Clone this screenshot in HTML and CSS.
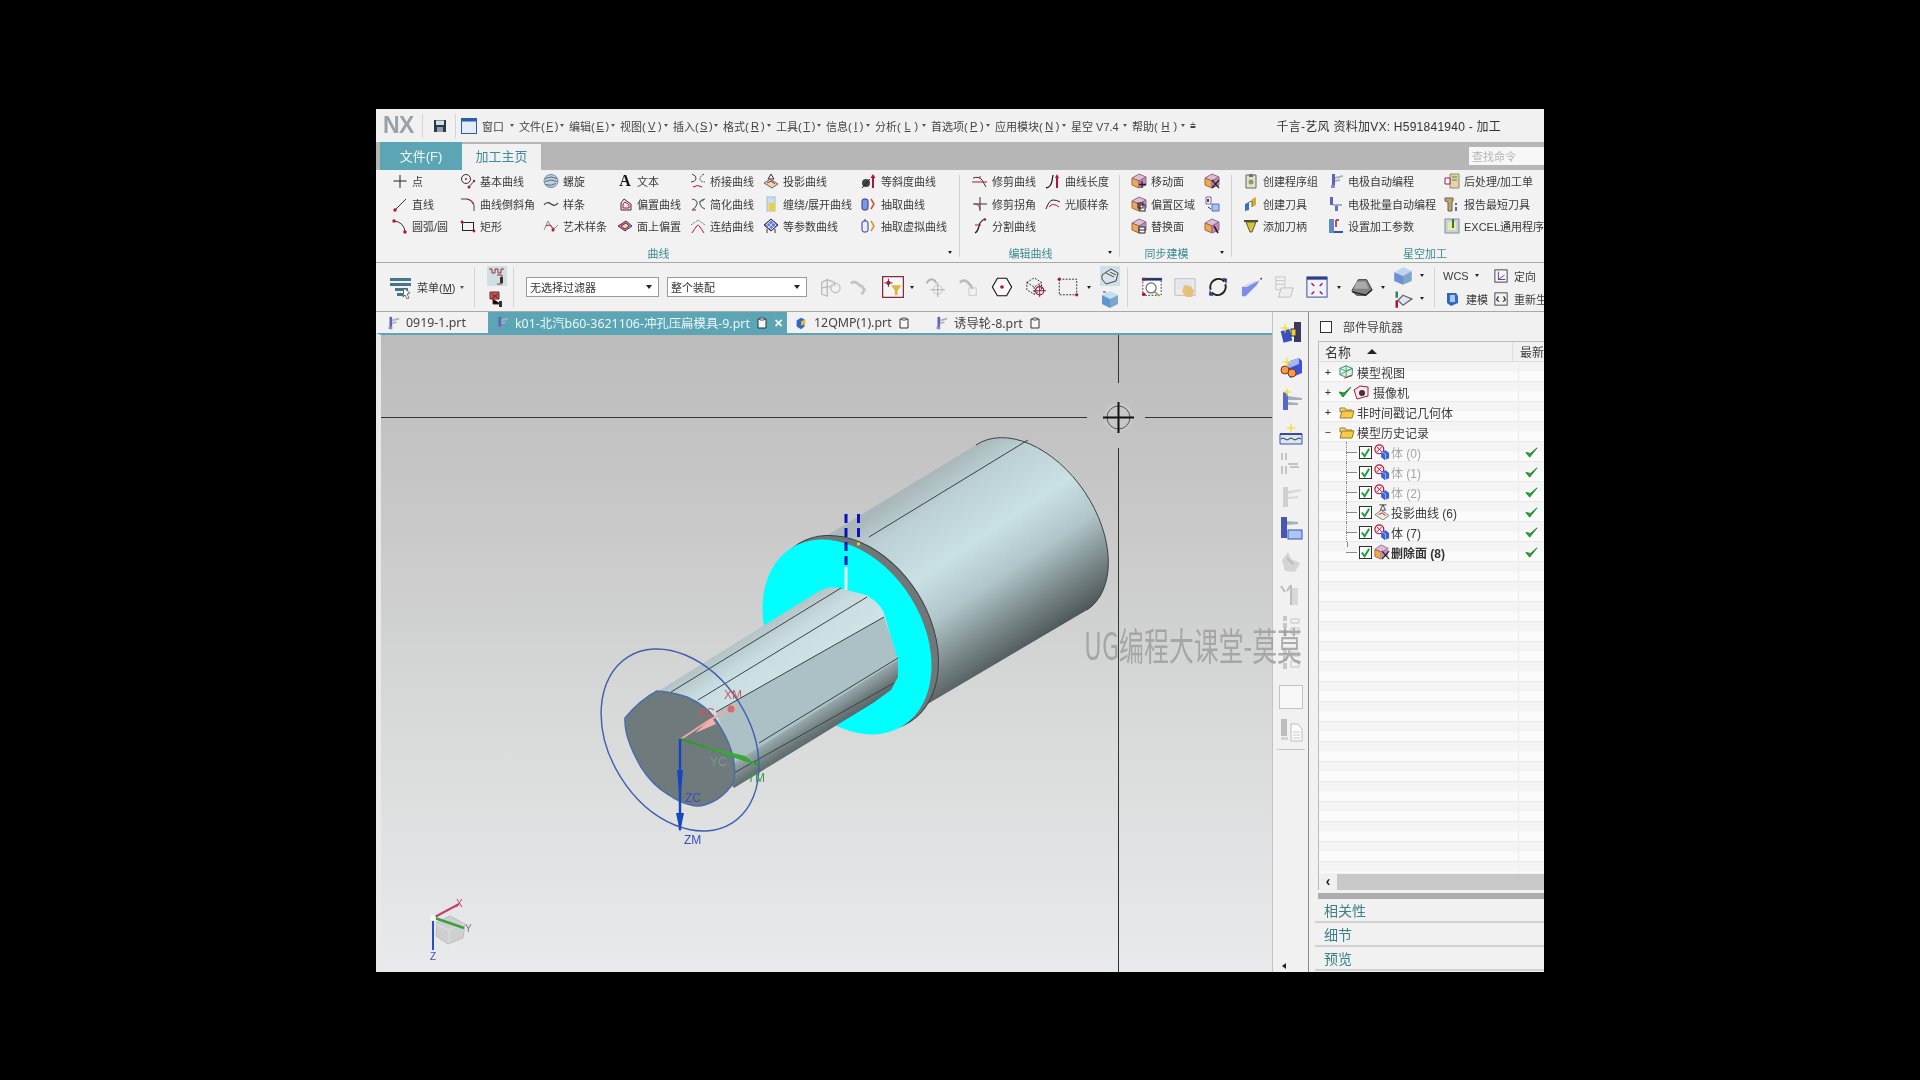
FILE: index.html
```html
<!DOCTYPE html>
<html lang="zh-CN">
<head>
<meta charset="utf-8">
<title>NX</title>
<link rel="stylesheet" href="styles.css">
</head>
<body>
<svg class="defs" xmlns="http://www.w3.org/2000/svg">
  <symbol id="pt" viewBox="0 0 16 16"><path d="M8 2v13M1.500 8h13" stroke="#222" fill="none"/></symbol>
  <symbol id="basic" viewBox="0 0 16 16"><circle cx="6" cy="6" r="4.500" fill="none" stroke="#333"/><circle cx="6" cy="6" r="1" fill="#a22"/><path d="M9 14l5-6" stroke="#444"/><circle cx="9" cy="14" r="1.500" fill="#b3123c"/><circle cx="14" cy="8" r="1.200" fill="#b3123c"/></symbol>
  <symbol id="helix" viewBox="0 0 16 16"><ellipse cx="8" cy="8" rx="7" ry="6.500" fill="#c2d0de" stroke="#6f8aa3"/><path d="M2 5.500q6-3 12 0M2 8.500q6-3 12 0M2 11.500q6 2 11-1" stroke="#50708c" fill="none"/></symbol>
  <symbol id="line" viewBox="0 0 16 16"><path d="M3 14L14 3" stroke="#333"/><circle cx="3" cy="14" r="1.700" fill="#b3123c"/></symbol>
  <symbol id="chamfer" viewBox="0 0 16 16"><path d="M1 3h6q6 1 7 6v6" stroke="#444" fill="none"/><path d="M7 3q5 1 6 5" stroke="#b3123c" fill="none"/></symbol>
  <symbol id="wave" viewBox="0 0 16 16"><path d="M1 9q3-4 7-1t7-1" stroke="#333" fill="none" stroke-width="1.200"/></symbol>
  <symbol id="offset" viewBox="0 0 16 16"><path d="M4 14V7l3-4 4 3 3 2v6z" stroke="#333" fill="#f8e4ea"/><path d="M6 12V8l2-2 3 2 1 1v3z" stroke="#b3123c" fill="none"/></symbol>
  <symbol id="arc" viewBox="0 0 16 16"><path d="M2 3q10 1 11 11" stroke="#333" fill="none"/><circle cx="2" cy="3" r="1.700" fill="#b3123c"/><circle cx="13" cy="14" r="1.700" fill="#b3123c"/></symbol>
  <symbol id="rect" viewBox="0 0 16 16"><rect x="2.500" y="4.500" width="11" height="8" fill="none" stroke="#222"/><circle cx="2" cy="4" r="1.400" fill="#b3123c"/><circle cx="14" cy="13" r="1.400" fill="#b3123c"/></symbol>
  <symbol id="art" viewBox="0 0 16 16"><path d="M1 12L5 3l5 9 5-5" stroke="#8c8c8c" fill="none"/><path d="M3 8q4-3 8 3" stroke="#b3123c" fill="none"/><circle cx="10" cy="12" r="1.500" fill="#b3123c"/></symbol>
  <symbol id="face" viewBox="0 0 16 16"><path d="M1 8l8-5 6 5-7 5z" fill="#7d99d6" stroke="#6a2a44"/><path d="M4 8l5-3 3 3-4 3z" fill="#f2d9a8" stroke="#b3123c"/></symbol>
  <symbol id="bridge" viewBox="0 0 16 16"><path d="M2 1q5 2 4 5T1 9" stroke="#444" fill="none"/><path d="M14 1q-4 2-4 5t5 3" stroke="#444" fill="none" stroke-dasharray="2 1"/><path d="M3 14q5-3 9 0" stroke="#b3123c" fill="none"/></symbol>
  <symbol id="simplify" viewBox="0 0 16 16"><path d="M2 3q6 1 5 5T2 14" stroke="#444" fill="none"/><path d="M15 3q-6 1-5 5t5 5" stroke="#444" fill="none"/><path d="M2 14h4" stroke="#b3123c"/><path d="M9 6l5-2" stroke="#2a8a50"/></symbol>
  <symbol id="join" viewBox="0 0 16 16"><path d="M1 7l7-5 7 5" stroke="#777" fill="none" stroke-dasharray="2 1"/><path d="M2 15q5-8 6-8t6 8" stroke="#b3123c" fill="none"/></symbol>
  <symbol id="proj" viewBox="0 0 16 16"><path d="M8 1l-3 5h6z" fill="none" stroke="#334"/><path d="M1 10l6-4 8 5-6 4z" fill="#e9d4b8" stroke="#666"/><path d="M4 10l4-2 4 3" stroke="#b3123c" fill="none"/></symbol>
  <symbol id="wrap" viewBox="0 0 16 16"><rect x="4" y="1" width="8" height="14" fill="#c9dcf0" stroke="#a9bcd0"/><rect x="6" y="7" width="6" height="8" fill="#efcf3a"/></symbol>
  <symbol id="iso" viewBox="0 0 16 16"><path d="M8 1l7 6-7 6-7-6z" fill="#6b7ad0" stroke="#1e2a70"/><path d="M5 4l6 6M8 2l5 5M3 6l6 6M11 4l-6 6M8 2L3 7M13 7l-5 5" stroke="#fff" stroke-width=".700"/><path d="M4 11v4M12 11v4" stroke="#333"/></symbol>
  <symbol id="slope" viewBox="0 0 16 16"><circle cx="5" cy="10" r="4" fill="#444"/><path d="M1 15l8-9" stroke="#222"/><path d="M12 15V4" stroke="#b3123c" stroke-width="2"/><path d="M9.500 5l2.500-4 2.500 4z" fill="#b3123c"/></symbol>
  <symbol id="extract" viewBox="0 0 16 16"><rect x="1" y="3" width="6" height="11" rx="2" fill="#7f97e0" stroke="#2a3a90"/><path d="M10 3l3 5-3 5" stroke="#d0502a" fill="none" stroke-width="1.500"/></symbol>
  <symbol id="vextract" viewBox="0 0 16 16"><rect x="1" y="3" width="6" height="11" rx="2" fill="#e8eeff" stroke="#2a3a90"/><path d="M4 3V1" stroke="#2a3a90"/><path d="M10 3l3 5-3 5" stroke="#d89020" fill="none" stroke-width="1.500"/></symbol>
  <symbol id="trim" viewBox="0 0 16 16"><path d="M1 5q6-2 9 2l4 7" stroke="#333" fill="none"/><path d="M0 9h15" stroke="#b3123c"/><path d="M8 3v3" stroke="#b3123c"/></symbol>
  <symbol id="corner" viewBox="0 0 16 16"><path d="M1 8h14M8 1v14" stroke="#333" fill="none"/><path d="M3 8q4 0 5 5" stroke="#b3123c" fill="none"/></symbol>
  <symbol id="split" viewBox="0 0 16 16"><path d="M3 15q3-2 4-7t6-7" stroke="#222" fill="none" stroke-width="1.300"/><path d="M3 7h6" stroke="#b3123c"/><circle cx="13" cy="1.500" r="1.200" fill="#b3123c"/></symbol>
  <symbol id="length" viewBox="0 0 16 16"><path d="M1 15q5-1 6-7l1-6" stroke="#222" fill="none" stroke-width="1.300"/><path d="M12 15V5" stroke="#b3123c" stroke-width="2"/><path d="M10 5l2-4 2 4z" fill="#b3123c"/></symbol>
  <symbol id="smooth" viewBox="0 0 16 16"><path d="M1 13q3-9 7-9t7 2" stroke="#222" fill="none"/><path d="M4 11q4-5 10 0" stroke="#b3123c" fill="none"/></symbol>
  <symbol id="cube" viewBox="0 0 16 16"><path d="M8 1l7 3-7 4-7-3z" fill="#d5c0d8" stroke="#96688c"/><path d="M1 5l7 3v7l-7-3z" fill="#eea75c" stroke="#a86a2c"/><path d="M8 8l7-4v8l-7 3z" fill="#c28bb8" stroke="#96688c"/></symbol>
  <symbol id="cubeplus" viewBox="0 0 16 16"><use href="#cube"/><path d="M11 8v7M8 11.500h7" stroke="#222" stroke-width="1.300"/></symbol>
  <symbol id="cubeoff" viewBox="0 0 16 16"><use href="#cube"/><rect x="9" y="9" width="5" height="6" fill="#fff" stroke="#222"/><rect x="7" y="7" width="5" height="5" fill="none" stroke="#222"/></symbol>
  <symbol id="cuberep" viewBox="0 0 16 16"><use href="#cube"/><path d="M8 9h6v6H8zM8 12h6" fill="#fff" stroke="#222"/></symbol>
  <symbol id="cubex" viewBox="0 0 16 16"><use href="#cube"/><path d="M8 7l7 8M15 7l-7 8" stroke="#222" stroke-width="1.200"/></symbol>
  <symbol id="cubeq" viewBox="0 0 16 16"><use href="#cube"/><path d="M10 8l4 7" stroke="#222" stroke-width="1.600"/></symbol>
  <symbol id="swap" viewBox="0 0 16 16"><path d="M2 1h5v7H2z" fill="#fff" stroke="#5a6ac0"/><path d="M8 8h7v7H8z" fill="#a9c4ea" stroke="#5a6ac0"/><path d="M4 3v3" stroke="#b3123c" stroke-width="2"/><path d="M4 11l3 2" stroke="#334" /></symbol>
  <symbol id="clip" viewBox="0 0 16 16"><path d="M3 2h10v13H3z" fill="#e0e0d8" stroke="#5c6c5c"/><rect x="6" y="1" width="4" height="3" fill="#6a7a6a"/><circle cx="8" cy="9" r="2.500" fill="#8aa04a"/></symbol>
  <symbol id="tool" viewBox="0 0 16 16"><path d="M2 8l4-2v8l-4 1z" fill="#3a70c0"/><path d="M9 3l4-2v8l-4 2z" fill="#e2a82a"/><path d="M6 6l3-1v6" stroke="#3a8a50" fill="none"/></symbol>
  <symbol id="funnel" viewBox="0 0 16 16"><path d="M1 2h14v2H1z" fill="#4a4f3a"/><path d="M3 4h10l-4 10H7z" fill="#d8c43c" stroke="#5a5a2a"/></symbol>
  <symbol id="part" viewBox="0 0 16 16"><rect x="4" y="1" width="3" height="14" fill="#5e65b8"/><path d="M7 4l8-2v2l-8 2zM7 7l5-1v2l-5 1z" fill="#aab0b8"/><rect x="3" y="12" width="4" height="3" fill="#8c8cc0"/></symbol>
  <symbol id="elec2" viewBox="0 0 16 16"><rect x="2" y="1" width="3" height="8" fill="#5e65b8"/><path d="M5 9h9M9 9v6" stroke="#7d9cc8" stroke-width="1.500"/><rect x="7" y="10" width="3" height="5" fill="#6a70c0"/></symbol>
  <symbol id="elec3" viewBox="0 0 16 16"><rect x="1" y="1" width="5" height="14" fill="#5e8cc0"/><path d="M6 15h9v-2H6z" fill="#3a4fc0"/><path d="M8 2v7M8 2h3" stroke="#b3123c" stroke-width="1.500"/></symbol>
  <symbol id="post" viewBox="0 0 16 16"><path d="M6 1h9v14H6z" fill="#e6d2a8" stroke="#8c8c70"/><path d="M1 5h5v6H1z" fill="#fff" stroke="#b3123c"/><path d="M8 4h5M8 7h5" stroke="#4a8a4a"/></symbol>
  <symbol id="short" viewBox="0 0 16 16"><path d="M1 2h8v3l-1 1v9H4V6L1 5z" fill="#c2a26a" stroke="#665"/><path d="M12 7v2M12 11v4" stroke="#2a3a90" stroke-width="1.500"/></symbol>
  <symbol id="excel" viewBox="0 0 16 16"><rect x="1" y="1" width="14" height="14" fill="#c8d4d8" stroke="#7f8f98"/><rect x="4" y="4" width="8" height="8" fill="#f0e8a0"/><path d="M9 1v9" stroke="#2a7a40" stroke-width="2"/></symbol>
  <symbol id="mn" viewBox="0 0 24 24"><path d="M1 3h21v3H1zM1 8h21v3H1zM6 13h13v3H6zM8 18h9v3H8z" fill="#46758c"/><path d="M15 13l6 5-3 1 2 4-2 1-2-4-2 2z" fill="#fff" stroke="#333" stroke-width=".700"/></symbol>
  <symbol id="hl1" viewBox="0 0 20 20"><path d="M2 3h3v4h3V3h3v4h3V3h3M10 9h5v9h-5" stroke="#9a2a2a" fill="none"/><rect x="13" y="11" width="3" height="6" fill="#333"/></symbol>
  <symbol id="hl2" viewBox="0 0 20 20"><path d="M3 3h9v7H3z" fill="#c25a5a" stroke="#6a2a2a"/><path d="M5 5l6 4M11 5l-6 4M6 10v5h8" stroke="#7a1a1a"/><rect x="12" y="12" width="3" height="6" fill="#333"/></symbol>
  <symbol id="g1" viewBox="0 0 24 24"><path d="M3 7l6-3v18l-6-2zM9 4l8 3v4M3 13l12-2" fill="none" stroke="#bcbcbc" stroke-width="1.500"/><circle cx="18" cy="13" r="5" fill="none" stroke="#c2c2c2" stroke-width="1.500"/></symbol>
  <symbol id="g2" viewBox="0 0 24 24"><path d="M3 8q4-3 7 0t5 3l3 4-3 5" fill="none" stroke="#c4c4c4" stroke-width="3"/></symbol>
  <symbol id="selbox" viewBox="0 0 24 24"><rect x=".700" y=".700" width="22.600" height="22.600" fill="#f6f6f6" stroke="#8c1c3c" stroke-width="1.300"/><path d="M7 3v9M2.500 7.500h9" stroke="#333"/><circle cx="7" cy="7.500" r="2.200" fill="#b3123c"/><path d="M10 10h11l-4 6v5h-3v-5z" fill="#e0b83c"/></symbol>
  <symbol id="g3" viewBox="0 0 24 24"><path d="M3 8q2-5 7-4 3 1 3 4" fill="none" stroke="#b0b0b0" stroke-width="2"/><circle cx="15" cy="15" r="5" fill="none" stroke="#c0c0c0"/><path d="M15 7v16M7 15h16" stroke="#a8a8a8"/></symbol>
  <symbol id="g4" viewBox="0 0 24 24"><path d="M3 7q5-4 9 0t5 7" fill="none" stroke="#bcbcbc" stroke-width="3"/><rect x="13" y="13" width="8" height="8" fill="none" stroke="#c8c8c8"/></symbol>
  <symbol id="hex" viewBox="0 0 24 24"><path d="M7 2.500h10l5.500 9.500L17 21.500H7L1.500 12z" fill="#f8f8f8" stroke="#111" stroke-width="1.200"/><circle cx="12" cy="12" r="2" fill="#b3123c"/></symbol>
  <symbol id="cubet" viewBox="0 0 24 24"><path d="M2 7l8-5 8 5v8l-8 5-8-5zM2 7l8 5 8-5M10 12v8" fill="none" stroke="#222" stroke-dasharray="2 1.500"/><circle cx="16" cy="16" r="4.500" fill="none" stroke="#8c1c3c" stroke-width="1.300"/><path d="M16 9v14M9 16h14" stroke="#8c1c3c"/></symbol>
  <symbol id="dash" viewBox="0 0 24 24"><rect x="2.500" y="3.500" width="19" height="17" fill="none" stroke="#222" stroke-dasharray="2 1.500"/><circle cx="2.500" cy="3.500" r="1.800" fill="#b3123c"/><circle cx="21.500" cy="20.500" r="1.800" fill="#b3123c"/></symbol>
  <symbol id="wire" viewBox="0 0 20 20"><path d="M2 9l9-6 7 4-2 8-10 3-4-5z" fill="#d8e6ea" stroke="#445"/><path d="M6 7l8 4M10 6l6 3" stroke="#445"/></symbol>
  <symbol id="box" viewBox="0 0 20 20"><path d="M10 2l8 4-8 4-8-4z" fill="#bfe0f4"/><path d="M2 6l8 4v9l-8-4z" fill="#5f95d0"/><path d="M10 10l8-4v9l-8 4z" fill="#7ea6cc"/><path d="M3 3h3" stroke="#b3123c"/></symbol>
  <symbol id="fit" viewBox="0 0 24 24"><rect x="1" y="2" width="22" height="20" fill="#fff" stroke="none"/><path d="M1 2h22v3H1z" fill="#2a3f8c"/><rect x="2" y="4" width="20" height="17" fill="none" stroke="#222" stroke-dasharray="2 1.500"/><rect x="2" y="2" width="3" height="3" fill="#8c1c3c"/><circle cx="3" cy="20" r="2" fill="#b3123c"/><circle cx="11" cy="13" r="5.500" fill="none" stroke="#667" stroke-width="1.300"/><path d="M15 17l5 5" stroke="#a8a050" stroke-width="2"/></symbol>
  <symbol id="zoomw" viewBox="0 0 24 24"><rect x="1" y="3" width="22" height="18" fill="#f2ece6" stroke="#b8b8c8"/><path d="M3 5h17v10H3z" fill="#dfe6f4"/><path d="M11 10l7 1 4 5-2 7h-7l-4-6z" fill="#e8c078"/></symbol>
  <symbol id="rot" viewBox="0 0 24 24"><path d="M4 15A9 9 0 0 1 19 6" fill="none" stroke="#222" stroke-width="2.200"/><path d="M20 9A9 9 0 0 1 5 18" fill="none" stroke="#222" stroke-width="2.200"/><path d="M17 2l5 1-1 6z" fill="#2a3f8c"/><path d="M7 22l-5-1 1-6z" fill="#2a3f8c"/></symbol>
  <symbol id="beam" viewBox="0 0 24 24"><path d="M1 12l14-6 5-1-3 5-12 12H1z" fill="#7d8ee8"/><path d="M1 12l14-6 5-1-14 7z" fill="#dbe2ff"/><circle cx="22" cy="3" r="1" fill="#8c1c3c"/></symbol>
  <symbol id="g5" viewBox="0 0 24 24"><path d="M3 1h10v14H3zM3 5h10M3 9h10" fill="none" stroke="#c4c4c4"/><path d="M9 13h13l-3 10H6z" fill="#eee" stroke="#bcbcbc"/></symbol>
  <symbol id="fitw" viewBox="0 0 24 24"><rect x="1" y="1" width="22" height="22" fill="#eef2fb" stroke="#2a3f8c"/><path d="M1 1h22v3H1z" fill="#2a3f8c"/><path d="M6 8l3 3M18 8l-3 3M6 20l3-3M18 20l-3-3" stroke="#b3123c" stroke-width="1.500"/></symbol>
  <symbol id="shade" viewBox="0 0 24 24"><path d="M1 16L8 4h9l6 11-7 6H6z" fill="#838383" stroke="#333"/><path d="M6 6h10l3 8H3z" fill="#aaa"/><path d="M1 17l15 4 7-6" fill="none" stroke="#222" stroke-width="1.500"/></symbol>
  <symbol id="cubeb" viewBox="0 0 16 16"><path d="M8 1l7 3-7 4-7-3z" fill="#bfd3f2"/><path d="M1 5l7 3v7l-7-3z" fill="#6d8fd8"/><path d="M8 8l7-4v8l-7 3z" fill="#7fa8c8"/></symbol>
  <symbol id="mix" viewBox="0 0 16 16"><path d="M8 5l7 3-7 5-4-4z" fill="#dfe4f4" stroke="#666"/><path d="M3 2v5" stroke="#2a8a50" stroke-width="2"/><path d="M3 9v6" stroke="#b3123c" stroke-width="2"/></symbol>
  <symbol id="orient" viewBox="0 0 16 16"><rect x="1" y="1" width="14" height="14" fill="#f4f4fa" stroke="#333"/><path d="M5 3v9h8" stroke="#2a3f8c" fill="none"/><path d="M5 12l7-5" stroke="#b3123c"/></symbol>
  <symbol id="model" viewBox="0 0 16 16"><path d="M3 2h9l2 3v7l-7 3-4-3z" fill="#2f68c8"/><path d="M6 4h5v7H6z" fill="#a8c8f0"/></symbol>
  <symbol id="regen" viewBox="0 0 16 16"><rect x="1" y="1" width="14" height="14" fill="#f4f4f4" stroke="#334"/><path d="M5 5l-2 4 3 2M11 5l2 4-3 2" stroke="#222" fill="none" stroke-width="1.300"/></symbol>
  <symbol id="tabdoc" viewBox="0 0 12 12"><path d="M2 2h8v9H2z" fill="#f7f7f7" stroke="#333"/><path d="M4 1h4v2H4z" fill="#fff" stroke="#333" stroke-width=".800"/></symbol>
  <symbol id="partb" viewBox="0 0 16 16"><path d="M3 5l5-3 4 2v8l-4 3-5-3z" fill="#2f68c8"/><path d="M8 6l5-2v5l-5 2z" fill="#e8b83c"/></symbol>
  <symbol id="nv1" viewBox="0 0 24 24"><rect x="3" y="10" width="9" height="12" fill="#3a4fc0" transform="rotate(-14 7 16)"/><rect x="15" y="2" width="7" height="20" fill="#3a3a60"/><rect x="12" y="9" width="5" height="7" fill="#e8d040" stroke="#333"/><path d="M5 7l1-5 1 5 5 1-5 1-1 5-1-5-5-1z" fill="#efe24a"/></symbol>
  <symbol id="nv2" viewBox="0 0 24 24"><path d="M8 7l12-4 3 3v12L11 23z" fill="#3d52d8"/><path d="M8 7l12-4v6L8 14z" fill="#a8b6f0"/><circle cx="6" cy="15" r="4" fill="#f0a040" stroke="#8c2a2a"/><circle cx="13" cy="18" r="4" fill="#f0a040" stroke="#8c2a2a"/><path d="M7 6l1-5 1 5 5 1-5 1-1 5-1-5-5-1z" fill="#efe24a"/></symbol>
  <symbol id="nv3" viewBox="0 0 24 24"><rect x="4" y="6" width="5" height="18" fill="#5868c8"/><path d="M9 10l14 2v2L9 14zM9 16l10 1v2L9 19z" fill="#a4b0b8"/><path d="M7 5l1-4 1 4 4 1-4 1-1 4-1-4-4-1z" fill="#efe24a"/></symbol>
  <symbol id="nv4" viewBox="0 0 24 24"><path d="M1 13h22v10H1z" fill="#d8e6ee" stroke="#3a4fc0"/><path d="M1 13h22" stroke="#1c2c90" stroke-width="1.500"/><path d="M2 18q2-2 4 0t4 0 4 0 4 0 4 0" stroke="#333" fill="none"/><path d="M11 6l1-5 1 5 5 1-5 1-1 5-1-5-5-1z" fill="#efe24a"/></symbol>
  <symbol id="nv5" viewBox="0 0 24 24"><path d="M3 2v7M7 2v7M9 13h10M3 15v8M7 15v8M11 16h9" stroke="#c4c4c4" stroke-width="2"/></symbol>
  <symbol id="nv6" viewBox="0 0 24 24"><rect x="4" y="2" width="5" height="20" fill="#cfcfcf"/><path d="M9 6l13-2v2L9 9zM9 12l10-1v2L9 14z" fill="#d8d8d8"/></symbol>
  <symbol id="nv7" viewBox="0 0 24 24"><rect x="2" y="1" width="6" height="21" fill="#4a56b0"/><rect x="9" y="14" width="14" height="9" fill="#a8c8f0" stroke="#3a4fc0"/><path d="M8 5l11 1v2L8 9z" fill="#a4b0b8"/></symbol>
  <symbol id="nv8" viewBox="0 0 24 24"><path d="M3 10l6-8 3 7 9 4-5 9-10-1z" fill="#d4d4d4"/><path d="M8 8l6 6" stroke="#bbb" stroke-width="2"/></symbol>
  <symbol id="nv9" viewBox="0 0 24 24"><path d="M2 3l4 6M12 2v20M12 2l-4 6" stroke="#bcbcbc" stroke-width="2" fill="none"/><rect x="13" y="5" width="6" height="17" fill="#d8d8d8"/></symbol>
  <symbol id="nv10" viewBox="0 0 24 24"><path d="M4 1h4v5H4zM4 8h4v5H4zM4 15h4v6H4z" fill="#c8c8c8"/><path d="M12 4h8v4h-8zM12 13h8v6h-8z" fill="none" stroke="#c4c4c4"/></symbol>
  <symbol id="nv11" viewBox="0 0 24 24"><rect x=".500" y=".500" width="23" height="23" fill="#f8f8f8" stroke="#c2c2c2"/></symbol>
  <symbol id="nv12" viewBox="0 0 24 24"><rect x="2" y="1" width="6" height="17" fill="#bdbdbd"/><path d="M2 19h7v3H2z" fill="#d4d4d4"/><path d="M12 6h7l4 5v12H12z" fill="#fbfbfb" stroke="#bdbdbd"/><path d="M14 14h7M14 17h7M14 20h7" stroke="#c8c8c8"/></symbol>
  <symbol id="mview" viewBox="0 0 18 16"><path d="M8 1l7 3v7l-7 3-7-3V4z" fill="#dff2e6" stroke="#1f8a60"/><path d="M1 4l7 3 7-3M8 7v7M8 1v6M1 11l14-7" stroke="#1f8a60" fill="none" stroke-width=".800"/><path d="M6 15l9-3" stroke="#b3123c"/></symbol>
  <symbol id="okg" viewBox="0 0 14 14"><path d="M1 7l4 5 8-10-7 6z" fill="#28a040" stroke="#1a8a30"/></symbol>
  <symbol id="cam" viewBox="0 0 16 16"><path d="M1 6l6-4 8 1v9l-11 3z" fill="#fbe8e8" stroke="#a01c3c"/><circle cx="9" cy="9" r="3" fill="#333"/><circle cx="9" cy="9" r="1" fill="#b3123c"/></symbol>
  <symbol id="folder" viewBox="0 0 16 14"><path d="M1 3h5l1 2h6v2H1z" fill="#f2dc88" stroke="#9a7a2a"/><path d="M1 13L3 6h12l-2 7z" fill="#f6c94a" stroke="#9a7a2a"/></symbol>
  <symbol id="tree-box" viewBox="0 0 14 14"><rect x=".500" y=".500" width="13" height="13" fill="#fff" stroke="#222"/><path d="M3 7l3 4 5-8" stroke="#1fa040" stroke-width="2.200" fill="none"/></symbol>
  <symbol id="body" viewBox="0 0 18 18"><circle cx="6" cy="6" r="5" fill="#fbe8e8" stroke="#b3123c" stroke-width="1.300"/><path d="M3 3l6 6M3 9l6-6" stroke="#b3123c"/><path d="M8 9l5-2 4 3v6l-5 2-4-3z" fill="#3d62d8"/><path d="M8 9l5 2v7" fill="none" stroke="#a8c0f0"/></symbol>
  <symbol id="projr" viewBox="0 0 18 18"><path d="M6 1h8M10 1l-3 6h6z" fill="none" stroke="#333"/><path d="M1 12l7-5 9 6-7 5z" fill="#f0ead8" stroke="#777"/><path d="M5 12l4-2 4 3" stroke="#b3123c" fill="none"/></symbol>
  <symbol id="del" viewBox="0 0 18 18"><path d="M8 1l8 4-8 4-7-3z" fill="#d5c0d8" stroke="#96688c"/><path d="M1 6l7 3v8l-7-3z" fill="#eea75c" stroke="#a86a2c"/><path d="M8 9l8-4v8l-8 4z" fill="#c28bb8"/><path d="M9 8l8 9M17 8l-8 9" stroke="#222" stroke-width="1.300"/></symbol>
  <symbol id="floppy" viewBox="0 0 14 14"><path d="M1 1h12v12H1z" fill="#2a3a48"/><rect x="3" y="1.500" width="8" height="4.500" fill="#d8dee4"/><rect x="4" y="8" width="6" height="5" fill="#8fa0b0"/></symbol>
  <symbol id="win" viewBox="0 0 16 16"><rect x=".500" y=".500" width="15" height="15" fill="#e4ecfa" stroke="#2a5fa8"/><path d="M1 1h14v2.500H1z" fill="#2a5fa8"/></symbol>
</svg>

<div class="stage">
  <div class="window">
    <header class="titlebar">
      <span class="logo">NX</span>
      <i class="v-sep"></i>
      <svg class="i14"><use href="#floppy"/></svg>
      <i class="v-sep"></i>
      <svg class="i16"><use href="#win"/></svg>
      <nav class="menu">
        <span>窗口<i class="ar"></i></span>
        <span>文件(<u>F</u>)<i class="ar"></i></span>
        <span>编辑(<u>E</u>)<i class="ar"></i></span>
        <span>视图(<u>V</u>)<i class="ar"></i></span>
        <span>插入(<u>S</u>)<i class="ar"></i></span>
        <span>格式(<u>R</u>)<i class="ar"></i></span>
        <span>工具(<u>T</u>)<i class="ar"></i></span>
        <span>信息(<u>I</u>)<i class="ar"></i></span>
        <span>分析(<u>L</u>)<i class="ar"></i></span>
        <span>首选项(<u>P</u>)<i class="ar"></i></span>
        <span>应用模块(<u>N</u>)<i class="ar"></i></span>
        <span>星空 V7.4<i class="ar"></i></span>
        <span>帮助(<u>H</u>)<i class="ar"></i></span>
        <span class="more">⩧</span>
      </nav>
      <div class="wintitle">千言-艺风 资料加VX: H591841940 - 加工</div>
    </header>

    <div class="tabrow">
      <div class="tab-file">文件(F)</div>
      <div class="tab-home">加工主页</div>
      <div class="search">查找命令</div>
    </div>

    <div class="ribbon">
      <section class="group g-curve">
        <div class="items">
          <div class="ri"><svg class="i"><use href="#pt"/></svg>点</div>
          <div class="ri"><svg class="i"><use href="#line"/></svg>直线</div>
          <div class="ri"><svg class="i"><use href="#arc"/></svg>圆弧/圆</div>
          <div class="ri"><svg class="i"><use href="#basic"/></svg>基本曲线</div>
          <div class="ri"><svg class="i"><use href="#chamfer"/></svg>曲线倒斜角</div>
          <div class="ri"><svg class="i"><use href="#rect"/></svg>矩形</div>
          <div class="ri"><svg class="i"><use href="#helix"/></svg>螺旋</div>
          <div class="ri"><svg class="i"><use href="#wave"/></svg>样条</div>
          <div class="ri"><svg class="i"><use href="#art"/></svg>艺术样条</div>
          <div class="ri"><span class="glyph-a">A</span>文本</div>
          <div class="ri"><svg class="i"><use href="#offset"/></svg>偏置曲线</div>
          <div class="ri"><svg class="i"><use href="#face"/></svg>面上偏置</div>
          <div class="ri"><svg class="i"><use href="#bridge"/></svg>桥接曲线</div>
          <div class="ri"><svg class="i"><use href="#simplify"/></svg>简化曲线</div>
          <div class="ri"><svg class="i"><use href="#join"/></svg>连结曲线</div>
          <div class="ri"><svg class="i"><use href="#proj"/></svg>投影曲线</div>
          <div class="ri"><svg class="i"><use href="#wrap"/></svg>缠绕/展开曲线</div>
          <div class="ri"><svg class="i"><use href="#iso"/></svg>等参数曲线</div>
          <div class="ri"><svg class="i"><use href="#slope"/></svg>等斜度曲线</div>
          <div class="ri"><svg class="i"><use href="#extract"/></svg>抽取曲线</div>
          <div class="ri"><svg class="i"><use href="#vextract"/></svg>抽取虚拟曲线</div>
        </div>
        <div class="g-foot"><span>曲线</span><i class="ar dark"></i></div>
      </section>
      <section class="group g-edit">
        <div class="items">
          <div class="ri"><svg class="i"><use href="#trim"/></svg>修剪曲线</div>
          <div class="ri"><svg class="i"><use href="#corner"/></svg>修剪拐角</div>
          <div class="ri"><svg class="i"><use href="#split"/></svg>分割曲线</div>
          <div class="ri"><svg class="i"><use href="#length"/></svg>曲线长度</div>
          <div class="ri"><svg class="i"><use href="#smooth"/></svg>光顺样条</div>
        </div>
        <div class="g-foot"><span>编辑曲线</span><i class="ar dark"></i></div>
      </section>
      <section class="group g-sync">
        <div class="items">
          <div class="ri"><svg class="i"><use href="#cubeplus"/></svg>移动面</div>
          <div class="ri"><svg class="i"><use href="#cubeoff"/></svg>偏置区域</div>
          <div class="ri"><svg class="i"><use href="#cuberep"/></svg>替换面</div>
          <div class="ri"><svg class="i"><use href="#cubex"/></svg></div>
          <div class="ri"><svg class="i"><use href="#swap"/></svg></div>
          <div class="ri"><svg class="i"><use href="#cubeq"/></svg></div>
        </div>
        <div class="g-foot"><span>同步建模</span><i class="ar dark"></i></div>
      </section>
      <section class="group g-star">
        <div class="items">
          <div class="ri"><svg class="i"><use href="#clip"/></svg>创建程序组</div>
          <div class="ri"><svg class="i"><use href="#tool"/></svg>创建刀具</div>
          <div class="ri"><svg class="i"><use href="#funnel"/></svg>添加刀柄</div>
          <div class="ri"><svg class="i"><use href="#part"/></svg>电极自动编程</div>
          <div class="ri"><svg class="i"><use href="#elec2"/></svg>电极批量自动编程</div>
          <div class="ri"><svg class="i"><use href="#elec3"/></svg>设置加工参数</div>
          <div class="ri"><svg class="i"><use href="#post"/></svg>后处理/加工单</div>
          <div class="ri"><svg class="i"><use href="#short"/></svg>报告最短刀具</div>
          <div class="ri"><svg class="i"><use href="#excel"/></svg>EXCEL通用程序单</div>
        </div>
        <div class="g-foot"><span>星空加工</span></div>
      </section>
    </div>

    <div class="toolbar">
      <div class="tb-menu"><svg class="i24"><use href="#mn"/></svg><span>菜单(<u>M</u>)</span><i class="ar"></i></div>
      <i class="tb-sep"></i>
      <div class="tb-stack">
        <svg class="i20 on"><use href="#hl1"/></svg>
        <svg class="i20"><use href="#hl2"/></svg>
      </div>
      <i class="tb-sep"></i>
      <div class="select sel-a">无选择过滤器<i class="ar big"></i></div>
      <div class="select sel-b">整个装配<i class="ar big"></i></div>
      <div class="tb-icons">
        <svg class="i22"><use href="#g1"/></svg>
        <svg class="i22"><use href="#g2"/></svg>
        <svg class="i22"><use href="#selbox"/></svg>
        <span class="cell"><i class="ar dark"></i></span>
        <svg class="i22"><use href="#g3"/></svg>
        <svg class="i22"><use href="#g4"/></svg>
        <svg class="i22"><use href="#hex"/></svg>
        <svg class="i22"><use href="#cubet"/></svg>
        <svg class="i22"><use href="#dash"/></svg>
        <span class="cell"><i class="ar dark"></i></span>
        <div class="stack"><svg class="i20 on"><use href="#wire"/></svg><svg class="i20"><use href="#box"/></svg></div>
        <span class="cell"><i class="t-line"></i></span>
        <svg class="i22"><use href="#fit"/></svg>
        <svg class="i22"><use href="#zoomw"/></svg>
        <svg class="i22"><use href="#rot"/></svg>
        <svg class="i22"><use href="#beam"/></svg>
        <svg class="i22"><use href="#g5"/></svg>
        <svg class="i22"><use href="#fitw"/></svg>
        <span class="cell"><i class="ar dark"></i></span>
        <svg class="i22"><use href="#shade"/></svg>
        <span class="cell"><i class="ar dark"></i></span>
        <div class="stack"><svg class="i20"><use href="#cubeb"/></svg><svg class="i20"><use href="#mix"/></svg></div>
        <div class="stack"><span class="cell"><i class="ar dark"></i></span><span class="cell"><i class="ar dark"></i></span></div>
        <span class="cell"><i class="t-line"></i></span>
      </div>
      <div class="wcs">
        <span>WCS<i class="ar dark"></i></span>
        <span><svg class="i14"><use href="#orient"/></svg>定向</span>
        <span><svg class="i16 ind"><use href="#model"/></svg>建模</span>
        <span><svg class="i14"><use href="#regen"/></svg>重新生成</span>
      </div>
    </div>

    <div class="main">
      <div class="work">
        <div class="doctabs">
          <div class="dt dt-1"><svg class="i14"><use href="#part"/></svg>0919-1.prt</div>
          <div class="dt dt-2"><svg class="i14"><use href="#part"/></svg>k01-北汽b60-3621106-冲孔压扁模具-9.prt<svg class="i12"><use href="#tabdoc"/></svg><span class="close">✕</span></div>
          <div class="dt dt-3"><svg class="i14"><use href="#partb"/></svg>12QMP(1).prt<svg class="i12"><use href="#tabdoc"/></svg></div>
          <div class="dt dt-4"><svg class="i14"><use href="#part"/></svg>诱导轮-8.prt<svg class="i12"><use href="#tabdoc"/></svg></div>
        </div>
        <div class="view">
          <svg class="model" viewBox="381 335 891 637" xmlns="http://www.w3.org/2000/svg">
            <defs>
              <linearGradient id="bg-big" gradientUnits="userSpaceOnUse" x1="976" y1="445" x2="1087" y2="610">
                <stop offset="0" stop-color="#aab8bb"/><stop offset=".14" stop-color="#bdd1d5"/><stop offset=".4" stop-color="#c9e0e4"/><stop offset=".62" stop-color="#b0c5c9"/><stop offset=".82" stop-color="#7c8a8c"/><stop offset="1" stop-color="#4d5759"/>
              </linearGradient>
              <linearGradient id="bg-shaft" gradientUnits="userSpaceOnUse" x1="657" y1="692" x2="728" y2="802">
                <stop offset="0" stop-color="#b2c2c5"/><stop offset=".2" stop-color="#c9dde1"/><stop offset=".45" stop-color="#cfe2e6"/><stop offset=".75" stop-color="#a4b8bc"/><stop offset=".9" stop-color="#6c797b"/><stop offset="1" stop-color="#4f5a5c"/>
              </linearGradient>
            </defs>
            <path d="M816 542L976 445A99.400 64 56 0 1 1087 610L909 715Z" fill="url(#bg-big)"/>
            <path d="M976 445A99.400 64 56 0 1 1087 610" fill="none" stroke="#3b4244"/>
            <path d="M1028 440L869 537" stroke="#3b4244" fill="none"/>
            <ellipse cx="854" cy="633" rx="105" ry="75" transform="rotate(58 854 633)" fill="#6f7779" stroke="#3b4244"/>
            <ellipse cx="847" cy="637" rx="105" ry="75" transform="rotate(58 847 637)" fill="#00ffff"/>
            <path d="M657 692L816 593Q828 585 839 588L866 595Q880 603 884 613L891 637L898 660V677L891 690L873 703L734 788Z" fill="url(#bg-shaft)"/>
            <path d="M716 712L884 617L898 660L734 763Z" fill="#acc1c5"/>
            <path d="M671 692L841 588M698 700L867 597M716 712L884 617M759 743L898 658M734 773L894 683" stroke="#3b4244" fill="none"/>
            <path d="M625 718Q640 700 657 691Q672 692 687 697Q706 705 716 720Q732 745 734 763Q736 778 732 785Q722 798 712 802Q700 808 691 805Q680 803 669 795Q652 785 641 767Q624 738 625 718Z" fill="#6f7a7c" stroke="#4a6ea8" stroke-width="1.500"/>
            <ellipse cx="680" cy="740" rx="98" ry="70" transform="rotate(58 680 740)" fill="none" stroke="#3e5fb0" stroke-width="1.400"/>
            <path d="M681 739L708 721L737 705" stroke="#f0a8a8" stroke-width="2" fill="none"/>
            <path d="M695 733L712 718L716 724Z" fill="#f3b0b0"/>
            <circle cx="731" cy="709" r="3.500" fill="#d66a6a"/>
            <path d="M681 739L760 765" stroke="#2e9a2e" stroke-width="2"/>
            <path d="M700 745L745 756L758 766Z" fill="#3aa83a"/>
            <path d="M680 739V830" stroke="#1747c0" stroke-width="2.500"/>
            <path d="M677 770H683L681 792H679ZM676 813H684L680 832Z" fill="#1747c0"/>
            <text class="lbl pink" x="724" y="699">XM</text>
            <text class="lbl pink" x="698" y="717">XC</text>
            <text class="lbl faint" x="710" y="766">YC</text>
            <text class="lbl green" x="747" y="782">YM</text>
            <text class="lbl blue" x="685" y="802">ZC</text>
            <text class="lbl blue" x="684" y="844">ZM</text>
            <path d="M846 514V567M858.500 514V540" stroke="#0a12b8" stroke-width="3" stroke-dasharray="9 5"/>
            <path d="M846 567V590" stroke="#e8e8e8" stroke-width="3"/>
            <circle cx="858.500" cy="544" r="1.800" fill="#d8c83c"/>
            <path d="M381 417.500H1087M1145 417.500H1272M1118.500 335V383M1118.500 448V972" stroke="#333" fill="none"/>
            <circle cx="1118.500" cy="417.500" r="15" fill="#cfcfcf" opacity=".45"/>
            <circle cx="1118.500" cy="417.500" r="11.500" fill="none" stroke="#555"/>
            <path d="M1118.500 402V433M1103 417.500H1134" stroke="#111" stroke-width="2"/>
            <g>
              <path d="M437 922L450 916L465 924L463 938L448 944L436 936Z" fill="#cdcfd0" stroke="#bcbebf"/>
              <path d="M437 925L449 930L464 924M449 930V943" fill="none" stroke="#dfe0e1"/>
              <path d="M433 918L459 904" stroke="#c0446a" stroke-width="2"/>
              <path d="M435 918L464 928" stroke="#3e9e3e" stroke-width="2.500"/>
              <path d="M433 918V950" stroke="#2a4fc0" stroke-width="2"/>
              <circle cx="433" cy="918" r="3" fill="#f6f6f6"/>
              <text class="lbl small rose" x="456" y="907">X</text>
              <text class="lbl small grey" x="465" y="932">Y</text>
              <text class="lbl small blue" x="430" y="960">Z</text>
            </g>
          </svg>
        </div>
      </div>

      <aside class="strip">
        <svg class="i24"><use href="#nv1"/></svg>
        <svg class="i24"><use href="#nv2"/></svg>
        <svg class="i24"><use href="#nv3"/></svg>
        <svg class="i24"><use href="#nv4"/></svg>
        <svg class="i24"><use href="#nv5"/></svg>
        <svg class="i24"><use href="#nv6"/></svg>
        <svg class="i24"><use href="#nv7"/></svg>
        <svg class="i24"><use href="#nv8"/></svg>
        <svg class="i24"><use href="#nv9"/></svg>
        <svg class="i24"><use href="#nv10"/></svg>
        <svg class="i24"><use href="#nv10"/></svg>
        <svg class="i24"><use href="#nv11"/></svg>
        <svg class="i24"><use href="#nv12"/></svg>
        <i class="strip-sep"></i>
        <i class="strip-arrow"></i>
      </aside>

      <aside class="panel">
        <div class="p-head"><i class="p-box"></i>部件导航器</div>
        <div class="tree">
          <div class="colhead"><span class="c-name">名称<i class="sort"></i></span><span class="c-new">最新</span></div>
          <div class="rows">
            <div class="row"><i class="exp">+</i><svg class="ic"><use href="#mview"/></svg><span>模型视图</span></div>
            <div class="row"><i class="exp">+</i><svg class="ic ok-a"><use href="#okg"/></svg><svg class="ic"><use href="#cam"/></svg><span class="t-cam">摄像机</span></div>
            <div class="row"><i class="exp">+</i><svg class="ic"><use href="#folder"/></svg><span>非时间戳记几何体</span></div>
            <div class="row"><i class="exp">−</i><svg class="ic"><use href="#folder"/></svg><span>模型历史记录</span></div>
            <div class="row child off"><i class="dots"></i><svg class="cb"><use href="#tree-box"/></svg><svg class="ic"><use href="#body"/></svg><span>体 (0)</span><svg class="okr"><use href="#okg"/></svg></div>
            <div class="row child off"><i class="dots"></i><svg class="cb"><use href="#tree-box"/></svg><svg class="ic"><use href="#body"/></svg><span>体 (1)</span><svg class="okr"><use href="#okg"/></svg></div>
            <div class="row child off"><i class="dots"></i><svg class="cb"><use href="#tree-box"/></svg><svg class="ic"><use href="#body"/></svg><span>体 (2)</span><svg class="okr"><use href="#okg"/></svg></div>
            <div class="row child"><i class="dots"></i><svg class="cb"><use href="#tree-box"/></svg><svg class="ic"><use href="#projr"/></svg><span>投影曲线 (6)</span><svg class="okr"><use href="#okg"/></svg></div>
            <div class="row child"><i class="dots"></i><svg class="cb"><use href="#tree-box"/></svg><svg class="ic"><use href="#body"/></svg><span>体 (7)</span><svg class="okr"><use href="#okg"/></svg></div>
            <div class="row child cur"><i class="dots last"></i><svg class="cb"><use href="#tree-box"/></svg><svg class="ic"><use href="#del"/></svg><span>删除面 (8)</span><svg class="okr"><use href="#okg"/></svg></div>
          </div>
          <div class="hscroll"><span class="sb-btn">‹</span><span class="sb-track"></span></div>
        </div>
        <div class="band"></div>
        <div class="acc">相关性</div>
        <div class="acc">细节</div>
        <div class="acc">预览</div>
      </aside>
    </div>
  </div>
  <div class="watermark">UG编程大课堂-莫莫</div>
</div>
</body>
</html>
```
FILE: styles.css
```css
* { box-sizing: border-box; }
html, body { margin: 0; padding: 0; background: #000; }
body {
  font-family: "Liberation Sans", "Noto Sans CJK SC", sans-serif;
  font-size: 11px;
  color: #3a3a3a;
}
.defs { display: none; }
svg { display: block; flex: none; overflow: hidden; }
i { font-style: normal; display: block; }

.stage {
  position: relative;
  width: 1920px;
  height: 1080px;
  padding: 109px 376px 108px;
  overflow: hidden;
}
.window {
  width: 1168px;
  height: 863px;
  background: #f1f1f1;
  display: flex;
  flex-direction: column;
  overflow: hidden;
  filter: blur(.4px);
}

.i { width: 16px; height: 16px; }
.i12 { width: 12px; height: 12px; }
.i14 { width: 14px; height: 14px; }
.i16 { width: 16px; height: 16px; }
.i20 { width: 20px; height: 20px; }
.i22 { width: 22px; height: 22px; }
.i24 { width: 24px; height: 24px; }

.ar {
  width: 0;
  height: 0;
  border-left: 2.500px solid transparent;
  border-right: 2.500px solid transparent;
  border-top: 3px solid #555;
  flex: none;
}
.ar.dark { border-top-color: #222; }
.ar.big { border-left-width: 3.500px; border-right-width: 3.500px; border-top: 4px solid #222; }

/* title bar */
.titlebar {
  height: 33px;
  flex: none;
  display: flex;
  align-items: center;
  padding-left: 7px;
  background: #f1f1f1;
}
.logo { font-size: 23px; font-weight: 700; color: #99a2a8; width: 34px; letter-spacing: -.5px; }
.v-sep { width: 1px; height: 24px; background: #d4d4d4; margin: 0 10px 0 5px; }
.titlebar .i14 { margin-right: 8px; }
.titlebar .i14 + .v-sep { margin: 0 5px 0 0; }
.titlebar .i16 { margin: 0 5px 0 0; }
.menu {
  display: grid;
  grid-template-columns: 37px 50px 51px 53px 50px 53px 50px 49px 56px 64px 76px 61px 58px 12px;
  color: #444;
}
.menu span { display: flex; align-items: center; justify-content: space-between; padding-right: 5px; white-space: nowrap; }
.menu .more { padding: 0; font-size: 10px; }
.wintitle { margin-left: auto; padding-right: 43px; font-size: 12px; letter-spacing: .25px; color: #333; white-space: nowrap; }

/* tabs */
.tabrow {
  height: 28px;
  flex: none;
  background: #b6b6b6;
  display: flex;
  padding-left: 4px;
  font-size: 13px;
  align-items: stretch;
}
.tab-file { width: 82px; background: #5ba5b4; color: #f2fbfc; display: flex; align-items: center; justify-content: center; padding-bottom: 2px; }
.tab-home { width: 79px; margin-top: 2px; padding-bottom: 4px; background: #f1f1f1; color: #3f8c99; display: flex; align-items: center; justify-content: center; }
.search {
  margin: 5px 0 5px auto;
  width: 75px;
  background: #f7f7f7;
  color: #b4b4b4;
  font-size: 11px;
  padding-left: 3px;
  display: flex;
  align-items: center;
}

/* ribbon */
.ribbon {
  height: 93px;
  flex: none;
  display: flex;
  background: #f2f2f2;
  border-bottom: 1px solid #a8a8a8;
}
.group {
  display: flex;
  flex-direction: column;
  flex: none;
  background: linear-gradient(#d0d0d0, #d0d0d0) right 5px / 1px 82px no-repeat;
}
.items { display: grid; grid-auto-flow: column; grid-template-rows: repeat(3, 22.5px); }
.ri { display: flex; align-items: center; gap: 4px; white-space: nowrap; }
.glyph-a { width: 16px; font: 700 16px "Liberation Serif", serif; color: #111; text-align: center; }
.g-foot { margin-top: auto; height: 21px; padding-top: 2px; display: flex; align-items: center; color: #3c8a8f; }
.g-foot span { flex: 1; text-align: center; }
.g-foot .ar { margin: 0 8px 0 7px; }

.g-curve { width: 584px; padding-left: 16px; }
.g-curve .items { grid-template-columns: 68px 83px 74px 73px 73px 98px 97px; }
.g-curve .g-foot { margin-left: -16px; }
.g-edit { width: 160px; padding-left: 12px; }
.g-edit .items { grid-template-columns: 73px 75px; }
.g-edit .g-foot { margin-left: -12px; }
.g-sync { width: 112px; padding-left: 11px; }
.g-sync .items { grid-template-columns: 73px 28px; }
.g-sync .g-foot { margin-left: -11px; }
.g-star { width: 386px; padding-left: 11px; background: none; }
.g-star .items { grid-template-columns: 85px 116px 170px; }
.g-star .g-foot { margin-left: -11px; }

/* toolbar */
.toolbar {
  height: 49px;
  flex: none;
  display: flex;
  align-items: center;
  background: #f1f1f1;
  border-bottom: 1px solid #a8a8a8;
}
.toolbar > * { flex: none; }
.tb-menu { width: 92px; padding-left: 13px; display: flex; align-items: center; gap: 4px; white-space: nowrap; }
.tb-sep { width: 1px; height: 40px; background: #d4d4d4; }
.tb-menu + .tb-sep { margin: 0 6px; }
.tb-stack { width: 32px; padding-left: 6px; display: flex; flex-direction: column; gap: 3px; }
.tb-stack .on, .stack .on { background: #cfe0e4; }
.select {
  height: 20px;
  background: #fff;
  border: 1px solid #9a9a9a;
  display: flex;
  align-items: center;
  justify-content: space-between;
  padding: 0 6px 0 3px;
  color: #333;
  font-size: 11px;
}
.sel-a { width: 133px; margin-left: 12px; }
.sel-b { width: 140px; margin-left: 8px; }
.tb-icons {
  margin-left: 12px;
  display: grid;
  grid-template-columns: 29px 34px 20px 22px 33px 34px 34px 32px 22px 21px 17px 24px 33px 33px 34px 32px 33px 23px 22px 22px 20px 19px 12px 19px;
  align-items: center;
}
.cell { width: 20px; height: 20px; display: flex; align-items: center; justify-content: center; }
.stack { display: flex; flex-direction: column; gap: 3px; width: 20px; }
.t-line { width: 1px; height: 40px; background: #d4d4d4; }
.wcs {
  display: grid;
  grid-template-columns: 51px 70px;
  row-gap: 6px;
  white-space: nowrap;
}
.wcs span { display: flex; align-items: center; gap: 6px; height: 17px; }
.wcs .ind { margin-left: 1px; }

/* main */
.main { flex: 1; min-height: 0; display: flex; }
.work { width: 896px; flex: none; display: flex; flex-direction: column; }
.doctabs { height: 21px; flex: none; display: flex; font: 12.4px "Noto Sans", "Noto Sans CJK SC", sans-serif; color: #444; white-space: nowrap; }
.dt { display: flex; align-items: center; gap: 6px; padding-left: 7px; }
.dt-1 { width: 112px; padding-left: 10px; }
.dt-2 { width: 299px; background: #5ba5b4; color: #eaf6f8; }
.dt-3 { width: 140px; }
.close { color: #fff; font-size: 11px; font-weight: 700; }
.view {
  flex: 1;
  min-height: 0;
  border-top: 2px solid #5ba5b4;
  border-left: 5px solid #e9e9e9;
  background: linear-gradient(#bcbcbc 0%, #c9c9c9 30%, #d8d9d9 60%, #e9eaeb 100%);
}
.model { width: 891px; height: 637px; }
.lbl { font: 12px "Liberation Sans", sans-serif; }
.lbl.small { font-size: 10px; }
.pink { fill: #d05a5a; }
.faint { fill: #8fb09a; opacity: .55; }
.green { fill: #3f9a50; }
.blue { fill: #3a4fc0; }
.rose { fill: #c0446a; }
.grey { fill: #777; }

/* strip */
.strip {
  width: 36px;
  flex: none;
  padding: 6px 0 0 6px;
  background: #f1f1f1;
  border-left: 1px solid #c4c4c4;
  display: grid;
  grid-template-rows: 37px 31px 35px 30px 34px 31px 34px 33px 32px 33px 37px 33px 31px 1px 1fr;
}
.strip svg:first-child { margin-top: 2px; }
.strip-sep { width: 28px; height: 1px; background: #c4c4c4; margin-left: -2px; }
.strip-arrow {
  align-self: end;
  margin: 0 0 3px 3px;
  width: 0;
  height: 0;
  border-top: 3px solid transparent;
  border-bottom: 3px solid transparent;
  border-right: 4px solid #222;
}

/* navigator */
.panel {
  width: 236px;
  flex: none;
  display: flex;
  flex-direction: column;
  padding-left: 9px;
  border-left: 1px solid #8c8c8c;
  background: #f1f1f1;
  font-size: 12px;
}
.p-head { height: 29px; flex: none; display: flex; align-items: center; padding-left: 2px; gap: 11px; color: #444; }
.p-box { width: 12px; height: 12px; border: 1.500px solid #333; background: #fff; }
.tree {
  width: 226px;
  height: 549px;
  flex: none;
  display: flex;
  flex-direction: column;
  border-left: 1px solid #bbb;
  border-top: 1px solid #bbb;
}
.colhead { height: 20px; flex: none; display: flex; align-items: center; background: #f1f1f1; border-bottom: 1px solid #ddd; }
.c-name { width: 200px; padding-left: 6px; display: flex; align-items: center; gap: 16px; border-right: 1px solid #ddd; height: 100%; font-size: 13px; }
.c-new { padding-left: 7px; white-space: nowrap; }
.sort { width: 0; height: 0; border-left: 5px solid transparent; border-right: 5px solid transparent; border-bottom: 5px solid #222; }
.rows {
  flex: 1;
  min-height: 0;
  background:
    linear-gradient(#ececec, #ececec) 199px 0 / 1px 100% no-repeat,
    repeating-linear-gradient(#f4f4f4 0, #f4f4f4 9px, #fbfbfb 10px, #fbfbfb 19px, #e9e9e9 19px, #e9e9e9 20px);
}
.row { height: 20px; display: flex; align-items: center; position: relative; color: #3a3a3a; white-space: nowrap; }
.exp { width: 8px; margin-left: 5px; font-size: 11px; line-height: 1; text-align: center; color: #333; }
.ic { width: 16px; height: 16px; margin-left: 7px; }
.row > span { margin-left: 2px; }
.ok-a { margin-left: 6px; width: 14px; height: 14px; }
.ok-a + .ic { margin-left: 1px; }
.row > .t-cam { margin-left: 4px; }
.child .dots {
  width: 11px;
  height: 20px;
  margin-left: 27px;
  border-left: 1px dotted #888;
  background: radial-gradient(circle, #888 .5px, transparent .6px) 0 10px / 2px 1px repeat-x;
}
.child .dots.last { border-left-color: transparent; background: linear-gradient(#888 50%, transparent 50%) 0 0 / 1px 2px repeat-y, radial-gradient(circle, #888 .5px, transparent .6px) 0 10px / 2px 1px repeat-x; background-size: 1px 10px, 2px 1px; background-repeat: no-repeat, repeat-x; }
.cb { width: 13px; height: 13px; margin-left: 2px; }
.child .ic { margin-left: 2px; }
.child > span { margin-left: 1px; }
.off > span { color: #a4a4a4; }
.cur > span { font-weight: 700; color: #333; }
.okr { width: 13px; height: 13px; position: absolute; left: 206px; top: 4px; }
.hscroll { height: 16px; flex: none; display: flex; background: #f0f0f0; margin-top: 1px; }
.sb-btn { width: 18px; text-align: center; font-weight: 700; line-height: 14px; font-size: 14px; color: #222; }
.sb-track { flex: 1; background: #c8c8c8; }
.band { height: 6px; margin: 3px 0 0; background: #adadad; flex: none; }
.acc {
  height: 24px;
  flex: none;
  margin-left: -3px;
  padding-left: 9px;
  display: flex;
  align-items: center;
  font-size: 14px;
  color: #3c7f88;
  border-bottom: 2px solid #d0d0d0;
}

.watermark {
  position: absolute;
  left: 1084px;
  top: 617px;
  font: 38px/1.4 "Noto Sans CJK SC", sans-serif;
  white-space: nowrap;
  color: #9b9b9b;
  opacity: .8;
  transform: scaleX(.655);
  transform-origin: left center;
  filter: blur(.5px);
}
```
